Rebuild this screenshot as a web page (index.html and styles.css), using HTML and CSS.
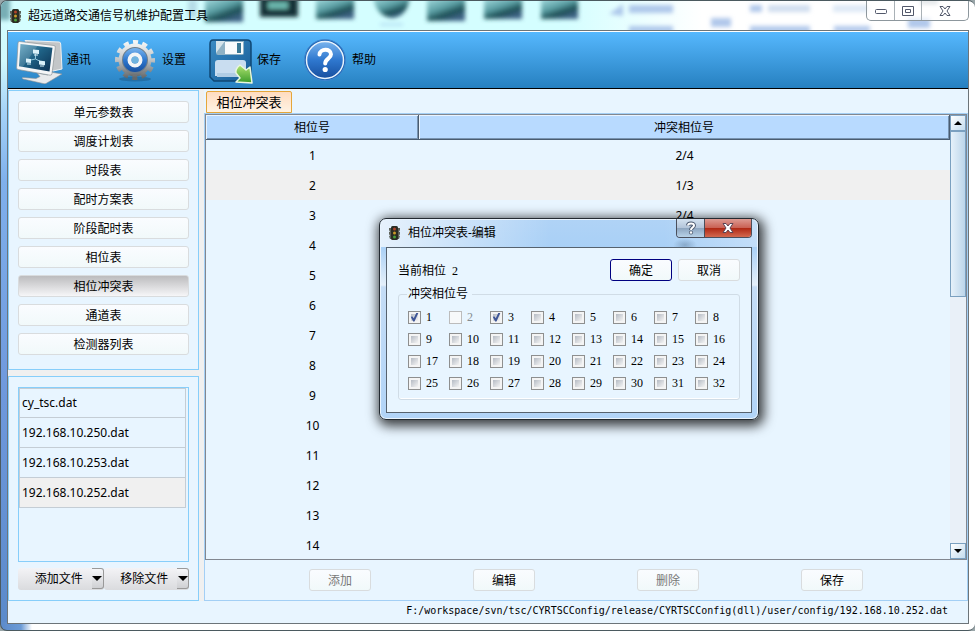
FILE: index.html
```html
<!DOCTYPE html>
<html lang="zh-CN">
<head>
<meta charset="utf-8">
<title>超远道路交通信号机维护配置工具</title>
<link rel="stylesheet" href="styles.css">
</head>
<body>
<svg class="defs" width="0" height="0" aria-hidden="true">
  <defs>
    <symbol id="lamp" viewBox="0 0 13 14">
      <path d="M1 2h11v2l-1 2h1v2l-1 2h1l-1 3H2l-1-3h1L1 8V6h1L1 4z" fill="#5d6158"/>
      <rect x="3" y="0" width="7" height="14" rx="1.500" fill="#2a2d24"/>
      <circle cx="6.500" cy="3" r="1.500" fill="#b0432a"/>
      <circle cx="6.500" cy="7" r="1.500" fill="#c99a28"/>
      <circle cx="6.500" cy="11" r="1.500" fill="#4a9d38"/>
    </symbol>
    <linearGradient id="steel" x1="0" y1="0" x2="0" y2="1"><stop offset="0" stop-color="#f4f5f5"/><stop offset=".5" stop-color="#c0c3c5"/><stop offset="1" stop-color="#64696c"/></linearGradient>
    <linearGradient id="screen" x1="0" y1="0" x2="1" y2="1"><stop offset="0" stop-color="#5fa3c0"/><stop offset=".45" stop-color="#1f6286"/><stop offset="1" stop-color="#0b2f50"/></linearGradient>
    <linearGradient id="ball" x1="0" y1="0" x2="0" y2="1"><stop offset="0" stop-color="#79b4ee"/><stop offset=".5" stop-color="#2f78cf"/><stop offset="1" stop-color="#174f9f"/></linearGradient>
    <linearGradient id="disk" x1="0" y1="0" x2="1" y2="1"><stop offset="0" stop-color="#3b8cc4"/><stop offset="1" stop-color="#165b96"/></linearGradient>
    <linearGradient id="leaf" x1="0" y1="0" x2="0" y2="1"><stop offset="0" stop-color="#b0e370"/><stop offset="1" stop-color="#3a9b2a"/></linearGradient>
    <linearGradient id="dark" x1="0" y1="0" x2=".6" y2="1"><stop offset="0" stop-color="#a6dde0"/><stop offset=".5" stop-color="#5a9ea3"/><stop offset=".75" stop-color="#1d4f55"/><stop offset="1" stop-color="#3f6486"/></linearGradient>
    <filter id="soft" x="-20%" y="-40%" width="140%" height="180%"><feGaussianBlur stdDeviation="2"/></filter>
  </defs>
</svg>
<div class="window">
  <header class="titlebar">
    <svg class="backdrop" width="975" height="30" aria-hidden="true">
      <g filter="url(#soft)">
        <rect x="-6" y="-4" width="16" height="24" fill="#78aeb5"/>
        <rect x="188" y="0" width="9" height="18" fill="#b5dce6"/>
        <rect x="205" y="-2" width="38" height="24" fill="url(#dark)"/>
        <rect x="260" y="-4" width="38" height="21" fill="#153238"/>
        <rect x="268" y="2" width="20" height="7" fill="#6cb8ae"/>
        <rect x="316" y="-2" width="38" height="21" fill="url(#dark)"/>
        <path d="M373-3h37q-3 20-18 21Q376 16 373-3z" fill="url(#dark)"/>
        <rect x="380" y="23" width="23" height="3" fill="#b9e3f4"/>
        <rect x="427" y="-2" width="38" height="23" fill="url(#dark)"/>
        <rect x="484" y="-2" width="38" height="21" fill="url(#dark)"/>
        <rect x="541" y="-2" width="37" height="21" fill="url(#dark)"/>
        <g fill="#a4bfe8" opacity=".85">
          <path d="M609 14l14-10v12z"/><rect x="629" y="5" width="44" height="8"/><rect x="629" y="26" width="44" height="7"/>
          <rect x="711" y="18" width="20" height="9"/><rect x="750" y="5" width="12" height="7"/>
          <rect x="768" y="5" width="42" height="7" fill="#c8d8ed"/><rect x="750" y="26" width="60" height="7"/>
          <rect x="833" y="5" width="36" height="7" fill="#d8e6f5"/><rect x="834" y="26" width="36" height="6"/>
          <rect x="908" y="18" width="22" height="10"/><rect x="920" y="0" width="18" height="4" fill="#8a9aa5"/>
        </g>
      </g>
    </svg>
    <svg class="lamp" width="13" height="14" aria-hidden="true"><use href="#lamp"/></svg>
    <h1>超远道路交通信号机维护配置工具</h1>
    <div class="winbuttons">
      <button aria-label="最小化"><svg width="14" height="8" viewBox="0 0 14 8"><rect x="1.500" y="2.500" width="11" height="4" rx="1" fill="#fff" stroke="#52586a"/></svg></button>
      <button aria-label="最大化"><svg width="14" height="12" viewBox="0 0 14 12"><path d="M1.500 1.500h11v9h-11zM4.500 4.500h5v3h-5z" fill="#fff" stroke="#52586a" fill-rule="evenodd"/></svg></button>
      <button aria-label="关闭"><svg width="14" height="12" viewBox="0 0 14 12"><path d="M2 1.500h3l2 2.500 2-2.500h3L9 6l3 4.500H9L7 8l-2 2.500H2L5 6z" fill="#fff" stroke="#52586a"/></svg></button>
    </div>
  </header>

  <div class="client">
    <nav class="toolbar">
      <button class="tool">
        <svg width="48" height="48" viewBox="0 0 48 48" aria-hidden="true">
          <path d="M9 4.500l34 1.500q1.500 0 1.700 2L46 33l-9 2z" fill="#c3c6c8" stroke="#eff1f2"/>
          <path d="M21 37l11 2 2-3 12 2-16 9.500q-1 .5-3 0L7 43q-2-1 0-1.500l13 1 4-2z" fill="#e8eaec" stroke="#8c9194" stroke-width=".6"/>
          <path d="M3.500 5.500L38 9.500q1.500 0 1.300 2L36 37.500q-.3 2-2 1.700L2 33.500q-1.500-.3-1.400-1.800L2 7q.1-1.700 1.500-1.500z" fill="#f5f6f7" stroke="#8c9396" stroke-width=".7"/>
          <path d="M4.500 8l32 3.800-3 23.700L3 30.300z" fill="url(#screen)"/>
          <path d="M19.500 18v5l-7 1.500m7-1.500l7 3.500" stroke="#8fc5dc" fill="none"/>
          <g fill="#d9f1fa"><path d="M17 13.500l6 .6v4l-6-.6zM18 18.500h4v1h-4zM10 22.500l5 .6v4l-5-.6zM11 27.500h4v1h-4zM23 24.500l6 .7v4l-6-.7zM24 29.500h4v1h-4z"/></g>
          <path d="M4.500 8l17 2L7 30.800l-4-.5z" fill="#fff" opacity=".15"/>
        </svg><span>通讯</span>
      </button>
      <button class="tool">
        <svg width="48" height="48" viewBox="0 0 48 48" aria-hidden="true">
          <ellipse cx="24" cy="43" rx="16" ry="2.500" fill="#174c74" opacity=".4"/>
          <circle cx="24" cy="24" r="16.500" fill="url(#steel)"/>
          <circle cx="24" cy="24" r="17.500" fill="none" stroke="url(#steel)" stroke-width="5" stroke-dasharray="5 4.163" stroke-dashoffset="2.500"/>
          <circle cx="24" cy="24" r="13" fill="#6c7d8c"/>
          <circle cx="24" cy="24" r="12" fill="url(#ball)"/>
          <circle cx="24" cy="24" r="5.500" fill="none" stroke="#f3f5f7" stroke-width="4"/>
          <circle cx="24" cy="24" r="3.500" fill="#6fb3df"/>
        </svg><span>设置</span>
      </button>
      <button class="tool">
        <svg width="48" height="48" viewBox="0 0 48 48" aria-hidden="true">
          <path d="M7 4h34q4 0 4 4v33q0 4-4 4H8l-4-4V8q0-4 3-4z" fill="url(#disk)" stroke="#0f4774" stroke-width="1.500"/>
          <path d="M10 5h28v12q0 2-2 2H12q-2 0-2-2z" fill="#8fb2c5"/>
          <path d="M10 5h9L10 17z" fill="#d5e4eb"/>
          <path d="M19 6h18v12H19z" fill="#f8fbfc"/><path d="M31 7h4v10h-4z" fill="#397895"/>
          <path d="M12 24h25q3 0 3 3v13H9V27q0-3 3-3z" fill="#c9ddf0"/>
          <path d="M11 37h28v4H11z" fill="#b0cce4"/>
          <path d="M34 29l6 5 4-3q1 8 2 16-8-.5-16-1l4-4-4-5q-1-4 4-8z" fill="url(#leaf)" stroke="#e8f6df" stroke-width="1.500" stroke-linejoin="round"/>
        </svg><span>保存</span>
      </button>
      <button class="tool">
        <svg width="48" height="48" viewBox="0 0 48 48" aria-hidden="true">
          <circle cx="24" cy="24" r="20.500" fill="#1b60b0" stroke="#3e86cf"/>
          <circle cx="24" cy="24" r="18.500" fill="url(#ball)" stroke="#e9f3fc" stroke-width="1.500"/>
          <path d="M18.500 18.500c.3-6 11.500-6.500 11.500-.3 0 4.500-5.800 4.300-5.800 9.300" fill="none" stroke="#fff" stroke-width="4" stroke-linecap="round"/>
          <circle cx="24.200" cy="33.500" r="2.600" fill="#fff"/>
        </svg><span>帮助</span>
      </button>
    </nav>

    <main class="workspace">
      <aside class="sidebar">
        <nav class="panel menu">
          <button class="btn">单元参数表</button>
          <button class="btn">调度计划表</button>
          <button class="btn">时段表</button>
          <button class="btn">配时方案表</button>
          <button class="btn">阶段配时表</button>
          <button class="btn">相位表</button>
          <button class="btn pressed">相位冲突表</button>
          <button class="btn">通道表</button>
          <button class="btn">检测器列表</button>
        </nav>
        <section class="panel files">
          <ul class="filelist">
            <li>cy_tsc.dat</li>
            <li>192.168.10.250.dat</li>
            <li>192.168.10.253.dat</li>
            <li class="current">192.168.10.252.dat</li>
          </ul>
          <div class="fileactions">
            <button class="split"><span>添加文件</span><i></i></button>
            <button class="split"><span>移除文件</span><i></i></button>
          </div>
        </section>
      </aside>

      <section class="content">
        <div class="tabs"><button class="tab">相位冲突表</button></div>
        <div class="page">
          <div class="tablewrap">
            <div class="tableclip">
              <table>
                <thead><tr><th class="phase">相位号</th><th>冲突相位号</th></tr></thead>
                <tbody>
                  <tr><td>1</td><td>2/4</td></tr>
                  <tr class="alt"><td>2</td><td>1/3</td></tr>
                  <tr><td>3</td><td>2/4</td></tr>
                  <tr><td>4</td><td></td></tr>
                  <tr><td>5</td><td></td></tr>
                  <tr><td>6</td><td></td></tr>
                  <tr><td>7</td><td></td></tr>
                  <tr><td>8</td><td></td></tr>
                  <tr><td>9</td><td></td></tr>
                  <tr><td>10</td><td></td></tr>
                  <tr><td>11</td><td></td></tr>
                  <tr><td>12</td><td></td></tr>
                  <tr><td>13</td><td></td></tr>
                  <tr><td>14</td><td></td></tr>
                </tbody>
              </table>
            </div>
            <div class="scrollbar">
              <button class="arrow up" aria-label="向上"></button>
              <div class="thumb"></div>
              <button class="arrow down" aria-label="向下"></button>
            </div>
          </div>
          <div class="actions">
            <button class="btn" disabled>添加</button>
            <button class="btn">编辑</button>
            <button class="btn" disabled>删除</button>
            <button class="btn">保存</button>
          </div>
        </div>
      </section>
    </main>
    <footer class="status">F:/workspace/svn/tsc/CYRTSCConfig/release/CYRTSCConfig(dll)/user/config/192.168.10.252.dat</footer>
  </div>
</div>

<div class="dialog" role="dialog" aria-labelledby="dialog-title">
  <header class="dialogbar">
    <svg width="13" height="14" aria-hidden="true"><use href="#lamp"/></svg>
    <h2 id="dialog-title">相位冲突表-编辑</h2>
    <div class="dialogbuttons">
      <button class="help" aria-label="帮助"><svg width="12" height="14" viewBox="0 0 12 14"><path d="M3 4.500C3.200 1.800 9 1.600 9 4.500 9 6.500 6 6.500 6 9" fill="none" stroke="#4d5a70" stroke-width="4"/><circle cx="6" cy="11.500" r="2" fill="#4d5a70"/><path d="M3 4.500C3.200 1.800 9 1.600 9 4.500 9 6.500 6 6.500 6 9" fill="none" stroke="#fff" stroke-width="2"/><circle cx="6" cy="11.500" r="1.200" fill="#fff"/></svg></button>
      <button class="close" aria-label="关闭"><svg width="14" height="12" viewBox="0 0 14 12"><path d="M2 1.500h3l2 2.500 2-2.500h3L9 6l3 4.500H9L7 8l-2 2.500H2L5 6z" fill="#fff" stroke="#5c4555"/></svg></button>
    </div>
  </header>
  <form class="dialogbody">
    <div class="current-phase">
      <p>当前相位<span class="num">2</span></p>
      <button type="button" class="btn default">确定</button>
      <button type="button" class="btn">取消</button>
    </div>
    <fieldset>
      <legend>冲突相位号</legend>
      <div class="checks">
        <label><input type="checkbox" checked>1</label>
        <label class="off"><input type="checkbox" disabled>2</label>
        <label><input type="checkbox" checked>3</label>
        <label><input type="checkbox">4</label>
        <label><input type="checkbox">5</label>
        <label><input type="checkbox">6</label>
        <label><input type="checkbox">7</label>
        <label><input type="checkbox">8</label>
        <label><input type="checkbox">9</label>
        <label><input type="checkbox">10</label>
        <label><input type="checkbox">11</label>
        <label><input type="checkbox">12</label>
        <label><input type="checkbox">13</label>
        <label><input type="checkbox">14</label>
        <label><input type="checkbox">15</label>
        <label><input type="checkbox">16</label>
        <label><input type="checkbox">17</label>
        <label><input type="checkbox">18</label>
        <label><input type="checkbox">19</label>
        <label><input type="checkbox">20</label>
        <label><input type="checkbox">21</label>
        <label><input type="checkbox">22</label>
        <label><input type="checkbox">23</label>
        <label><input type="checkbox">24</label>
        <label><input type="checkbox">25</label>
        <label><input type="checkbox">26</label>
        <label><input type="checkbox">27</label>
        <label><input type="checkbox">28</label>
        <label><input type="checkbox">29</label>
        <label><input type="checkbox">30</label>
        <label><input type="checkbox">31</label>
        <label><input type="checkbox">32</label>
      </div>
    </fieldset>
  </form>
</div>
</body>
</html>
```
FILE: styles.css
```css
* { box-sizing: border-box; }

body {
  margin: 0;
  height: 100vh;
  overflow: hidden;
  background: #9aa6a9;
  color: #000;
  font: 12px/16px "Noto Sans", "Noto Sans CJK SC", sans-serif;
}

button { font: inherit; color: inherit; margin: 0; padding: 0; border: 0; background: none; }
h1, h2, p, ul { margin: 0; padding: 0; font-size: 12px; font-weight: 400; }
svg { display: block; flex: none; }
.defs { position: absolute; }

/* window frame */
.window {
  display: flex;
  flex-direction: column;
  height: 100vh;
  padding: 0 6px 6px;
  border: 1px solid #4b5a60;
  border-radius: 7px;
  border-right-width: 0;
  background:
    linear-gradient(to right, #5c8bca, #6c9bd6 20px, #fff 31px) left bottom / 100% 8px no-repeat,
    linear-gradient(#d4feff, #d0f8fc 60px, #a5d3f8 110px, #7fb0ec 180px, #6e98dc 400px, #5a8aca) left / 7px 100% no-repeat,
    linear-gradient(to right, #d4feff 58%, #fff 72%);
  overflow: hidden;
}
.titlebar {
  position: relative;
  display: flex;
  align-items: center;
  flex: none;
  height: 29px;
  padding-left: 2px;
}
.backdrop { position: absolute; left: -7px; top: -1px; }
.lamp, .titlebar h1 { position: relative; }
.titlebar h1 { margin-left: 6px; }
.winbuttons {
  position: relative;
  display: flex;
  align-self: flex-start;
  margin-left: auto;
  height: 20px;
  border: 1px solid #8d979d;
  border-top: 0;
  border-radius: 0 0 5px 5px;
  background: rgba(255, 255, 255, .65);
}
.winbuttons button { display: grid; place-items: center; width: 27px; }
.winbuttons button + button { border-left: 1px solid #a9b1b6; }
.winbuttons button:last-child { width: 47px; }

.client {
  display: flex;
  flex-direction: column;
  flex: 1;
  min-height: 0;
  border: 1px solid #6c7479;
  background: #e8f5ff;
}

/* toolbar */
.toolbar {
  display: flex;
  gap: 20px;
  flex: none;
  height: 58px;
  padding-left: 8px;
  border-bottom: 1px solid #000;
  box-shadow: inset 0 1px #fff;
  background: linear-gradient(#57b9ff, #2680c0);
}
.tool { display: flex; align-items: center; gap: 3px; }

/* panels */
.workspace { display: flex; flex: 1; min-height: 0; background: #f0f0f0; }
.sidebar { display: flex; flex-direction: column; gap: 6px; width: 191px; padding-top: 1px; flex: none; }
.panel { border: 1px solid #87cefa; background: #e8f5ff; padding: 10px 9px; }
.menu { display: flex; flex-direction: column; gap: 7px; height: 280px; }
.files { display: flex; flex-direction: column; gap: 6px; flex: 1; }

.btn {
  height: 22px;
  padding-top: 2px;
  line-height: 16px;
  border: 1px solid #d9dcde;
  border-radius: 3px;
  background: linear-gradient(#fafcff, #f1f9fa);
}
.btn.pressed { background: linear-gradient(#bcbcbe, #f6f6f8); }
.btn:disabled { color: #787878; }
.btn.default { border-color: #000080; }

.filelist { flex: 1; list-style: none; border: 1px solid #87cefa; padding-right: 2px; }
.filelist li {
  height: 30px;
  padding: 0 2px;
  line-height: 29px;
  border: 1px solid #c4cdd5;
  border-top: 0;
}
.filelist li:first-child { box-shadow: inset 0 1px #c4cdd5; }
.filelist .current { background: #f0f0f0; }
.fileactions { display: flex; height: 22px; }
.split {
  display: flex;
  flex: 1;
  border-radius: 3px;
  background: linear-gradient(#f3f3f6, #dadbde);
}
.split span { flex: 1; line-height: 22px; padding-left: 8px; }
.split i {
  display: grid;
  place-items: center;
  width: 12px;
  height: 21px;
  border: 1px solid #999;
  border-left: 0;
  border-radius: 0 3px 3px 0;
  background: linear-gradient(#f6f7fa, #cfd0d3);
}
.split i::after { content: ""; border: 5px solid transparent; border-top-color: #000; border-bottom: 0; }

/* content */
.content { display: flex; flex-direction: column; flex: 1; min-width: 0; margin-left: 5px; background: #e8f5ff; }
.tabs { display: flex; height: 24px; padding: 2px 2px 0; flex: none; }
.tab {
  width: 86px;
  height: 22px;
  font-size: 13px;
  border: 1px solid #e5a63a;
  border-radius: 2px 2px 0 0;
  background: linear-gradient(#ffdcc0, #fff3e4);
}
.page { display: flex; flex-direction: column; flex: 1; min-height: 0; border: 1px solid #a3cff5; }
.tablewrap { display: flex; flex: 1; min-height: 0; border: 1px solid #828790; }
.tableclip { flex: 1; overflow: hidden; }
table { width: 100%; border-collapse: separate; border-spacing: 0; table-layout: fixed; }
th {
  height: 25px;
  padding: 2px 0 0;
  font-weight: 400;
  border: solid #4a5c70;
  border-width: 0 1px 1px 0;
  background: #b8daff;
  box-shadow: inset 1px 1px #e9f4ff, inset -1px -1px #7893b0;
}
.phase { width: 213px; }
td { height: 30px; padding: 2px 0 0; text-align: center; }
.alt { background: #f0f0f0; }
.scrollbar { display: flex; flex-direction: column; width: 16px; background: #e9f0f8; }
.arrow {
  display: grid;
  place-items: center;
  height: 16px;
  flex: none;
  border: 1px solid #7ba0c0;
  background: linear-gradient(135deg, #fff, #c4dcef);
}
.arrow::after { content: ""; border: 4px solid transparent; }
.up::after { border-bottom-color: #000; border-top: 0; }
.down::after { border-top-color: #000; border-bottom: 0; }
.down { margin-top: auto; }
.thumb { height: 166px; border: 1px solid #7ba0c0; background: linear-gradient(to right, #e6f1fa, #bcd5ea); }
.actions { display: flex; justify-content: space-evenly; align-items: center; height: 40px; padding: 0 2px; flex: none; }
.actions .btn { width: 62px; }
.status {
  flex: none;
  height: 22px;
  padding-right: 20px;
  text-align: right;
  font: 10px/20px "DejaVu Sans Mono", monospace;
}

/* dialog */
.dialog {
  position: absolute;
  left: 379px;
  top: 218px;
  width: 380px;
  padding: 0 6px 6px;
  border: 1px solid #232a31;
  border-radius: 7px;
  background:
    radial-gradient(ellipse at 305px 26px, rgba(90, 120, 150, .45), transparent 12px),
    linear-gradient(to right, rgba(255, 255, 255, .7), transparent 45%, transparent 75%, rgba(255, 255, 255, .3)) top / 100% 28px no-repeat,
    linear-gradient(#b0d3f6, #a9d0f6 28px, #e5f0fa 66px, #c5ddf6 68px, #b1d4f8);
  box-shadow: inset 0 0 0 1px #e9f4fe, 2px 3px 12px 3px rgba(0, 0, 0, .75);
}
.dialogbar { display: flex; align-items: center; height: 28px; padding-left: 2px; }
.dialogbar h2 { margin-left: 7px; }
.dialogbuttons {
  display: flex;
  align-self: flex-start;
  margin-left: auto;
  height: 19px;
  border: 1px solid #4a4f5c;
  border-top: 0;
  border-radius: 0 0 4px 4px;
  overflow: hidden;
}
.dialogbuttons button { display: grid; place-items: center; }
.help { width: 27px; background: linear-gradient(#d4e2f0, #b3c5da 48%, #8ea6c0 52%, #b8d2e8); }
.close { width: 47px; border-left: 1px solid #4a4f5c; background: linear-gradient(#dd9a92, #ca6255 48%, #b02915 52%, #d3694f); }
.dialogbody { border: 1px solid #56626e; background: #e8f5ff; padding: 11px 11px 12px; }
.current-phase { display: flex; gap: 6px; height: 22px; }
.current-phase p { flex: 1; line-height: 24px; }
.current-phase .btn { width: 62px; }
.num { margin-left: 6px; font-family: "Liberation Serif", serif; }
fieldset {
  min-width: 0;
  margin: 5px 0 0;
  padding: 4px 9px 5px;
  border: 1px solid #d0dce6;
  border-radius: 3px;
  box-shadow: inset 0 -1px #fff;
}
legend { padding: 0 4px 0 1px; margin-left: -1px; line-height: 16px; background: #e8f5ff; }
.checks { display: grid; grid-template-columns: repeat(8, 41px); grid-auto-rows: 22px; font-family: "Liberation Serif", serif; }
.checks label { display: flex; align-items: center; gap: 5px; }
.off { color: #858b90; }
input[type="checkbox"] {
  appearance: none;
  position: relative;
  flex: none;
  width: 13px;
  height: 13px;
  margin: 0;
  border: 1px solid #8e8f8f;
  background: linear-gradient(135deg, #b5bbc4, #f4f4f4) content-box, #f4f4f4;
  padding: 2px;
}
input[type="checkbox"]:disabled { border-color: #bcbcbc; background: #f7f9fa; }
input:checked::after {
  content: "";
  position: absolute;
  inset: 1px;
  background: #3e5596;
  clip-path: polygon(8% 48%, 28% 45%, 42% 65%, 72% 0, 95% 0, 50% 100%, 35% 100%);
}
```
